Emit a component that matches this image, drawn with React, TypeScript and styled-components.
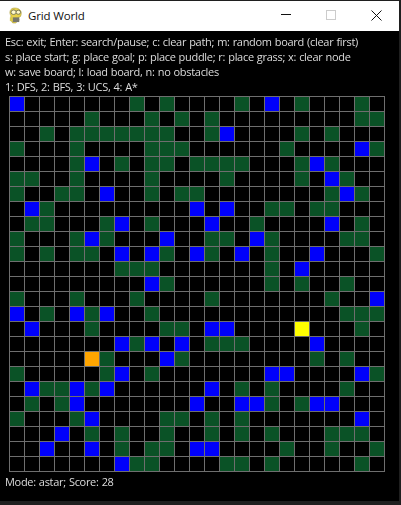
import React from "react";
import styled, { createGlobalStyle } from "styled-components";

const Global = createGlobalStyle`
  html, body { margin: 0; padding: 0; background: #1f1f1f; }
  #root { width: 401px; height: 505px; overflow: hidden; }
`;

const Frame = styled.div`
  width: 401px;
  height: 505px;
  box-sizing: border-box;
  padding: 1px 2px 4px 0;
  background: #1f1f1f;
`;

const Win = styled.div`
  display: flex;
  flex-direction: column;
  height: 100%;
  background: #000;
`;

const TitleBar = styled.div`
  display: flex;
  align-items: center;
  flex: 0 0 30px;
  background: #fff;
`;

const AppIcon = styled.svg`
  width: 15px;
  height: 17px;
  margin: 0 0 1px 8px;
  flex: none;
`;

const Title = styled.div`
  margin: 0 0 1px 5px;
  flex: 1;
  font: 11.5px "Open Sans", "Liberation Sans", sans-serif;
  letter-spacing: -0.15px;
  color: #111;
`;

const WinButton = styled.div<{ $wide?: boolean }>`
  width: ${(p) => (p.$wide ? 46 : 45)}px;
  height: 30px;
  padding-bottom: 2px;
  box-sizing: border-box;
  display: flex;
  align-items: center;
  justify-content: center;
`;

const Content = styled.div`
  flex: 1;
  display: flex;
  flex-direction: column;
  padding: 3px 0 0 5px;
  font: 11px/15px "Open Sans", "Liberation Sans", sans-serif;
  letter-spacing: -0.3px;
  word-spacing: 0.5px;
  color: #dcdcdc;
`;

const Line = styled.div`
  white-space: nowrap;
  filter: blur(0.3px);
`;

const Board = styled.div`
  display: grid;
  grid-template-columns: repeat(25, 14px);
  grid-auto-rows: 14px;
  gap: 1px;
  width: max-content;
  margin: 2px 0 0 4px;
  padding: 1px;
  background: #6e6e6e;
`;

const COLORS: Record<string, string> = {
  ".": "#000000",
  g: "#0a5226",
  b: "#0000fa",
  o: "#ffa500",
  y: "#ffff00",
};

const Cell = styled.div<{ $k: string }>`
  background: ${(p) => COLORS[p.$k]};
`;

const Status = styled.div`
  margin-top: 2px;
  white-space: nowrap;
  filter: blur(0.3px);
`;

const HELP = [
  "Esc: exit; Enter: search/pause; c: clear path; m: random board (clear first)",
  "s: place start; g: place goal; p: place puddle; r: place grass; x: clear node",
  "w: save board; l: load board, n: no obstacles",
  "1: DFS, 2: BFS, 3: UCS, 4: A*",
];

const ROWS: [number[], number[], [number, string]?][] = [
  [[8, 10, 15, 19, 23], [0, 17]],
  [[5, 9, 11, 13, 23, 24], []],
  [[2, 4, 5, 6, 7, 8, 9, 10, 13, 19, 21], [14]],
  [[0, 4, 9, 10, 11, 18, 24], [23]],
  [[4, 7, 9, 10, 12, 13, 14, 15, 19, 21], [5, 20]],
  [[0, 1, 4, 9, 14, 19, 22], [21]],
  [[0, 3, 4, 9, 11, 12, 21, 23], [6, 22]],
  [[2, 17, 18, 20, 21], [1, 12, 14]],
  [[1, 2, 6, 9, 16, 23], [7, 13, 21]],
  [[0, 4, 6, 13, 14, 17, 22, 23], [5, 10, 16]],
  [[0, 2, 4, 5, 10, 13, 17, 24], [7, 9, 12, 15, 20]],
  [[7, 8, 9, 17], [19]],
  [[10, 17, 19, 22], [9]],
  [[0, 4, 8, 13, 21], [24]],
  [[2, 5, 9, 22, 23, 24], [0, 4, 6]],
  [[5, 10, 11, 23], [1, 13, 14], [19, "y"]],
  [[8, 13, 14, 15], [7, 9, 11, 20]],
  [[6, 11, 20, 22], [10], [5, "o"]],
  [[0, 6, 9, 24], [7, 17, 18, 23]],
  [[2, 3, 5, 15, 17, 22], [1, 4, 6, 13]],
  [[1, 3, 17, 19], [4, 12, 15, 16, 20, 21]],
  [[0, 4, 10, 11, 13, 15], [5, 23]],
  [[5, 7, 10, 13, 15, 17, 21, 22, 23], [3]],
  [[7, 9, 10, 18, 21, 24], [2, 5, 12, 13]],
  [[8, 9, 14, 15, 17, 23], [7]],
];

const kindAt = (r: number, c: number): string => {
  const [g, b, s] = ROWS[r];
  if (s && s[0] === c) return s[1];
  if (b.includes(c)) return "b";
  if (g.includes(c)) return "g";
  return ".";
};

export default function App() {
  return (
    <Frame>
      <Global />
      <Win>
        <TitleBar>
          <AppIcon viewBox="0 0 16 18">
            <path d="M3 9C1 6 2 1 7 1s8 3 7 7c-.5 3-2 3-3 3l1 3-4 3H5l-2-3z" fill="#e8d24a" stroke="#a89a3a" strokeWidth=".6" />
            <ellipse cx="6" cy="5.5" rx="2.8" ry="2.4" fill="#fff8c8" stroke="#6a6a50" strokeWidth=".9" />
            <ellipse cx="11" cy="5.5" rx="2.4" ry="2.2" fill="#fff8c8" stroke="#6a6a50" strokeWidth=".9" />
            <rect x="5" y="11" width="7" height="5" fill="#77776c" />
            <rect x="2" y="11" width="3" height="4" fill="#d9c94a" />
          </AppIcon>
          <Title>Grid World</Title>
          <WinButton>
            <svg width="10" height="2" viewBox="0 0 10 2"><rect y="0" width="10" height="1" fill="#111" /></svg>
          </WinButton>
          <WinButton>
            <svg width="10" height="10" viewBox="0 0 10 10"><rect x=".5" y=".5" width="9" height="9" fill="none" stroke="#ccc" /></svg>
          </WinButton>
          <WinButton $wide>
            <svg width="11" height="11" viewBox="0 0 11 11"><path d="M.5.5l10 10M10.5.5l-10 10" stroke="#111" strokeWidth="1" fill="none" /></svg>
          </WinButton>
        </TitleBar>
        <Content>
          {HELP.map((t) => (
            <Line key={t}>{t}</Line>
          ))}
          <Board>
            {ROWS.flatMap((_, r) =>
              Array.from({ length: 25 }, (_, c) => <Cell key={`${r}-${c}`} $k={kindAt(r, c)} />)
            )}
          </Board>
          <Status>Mode: astar; Score: 28</Status>
        </Content>
      </Win>
    </Frame>
  );
}
